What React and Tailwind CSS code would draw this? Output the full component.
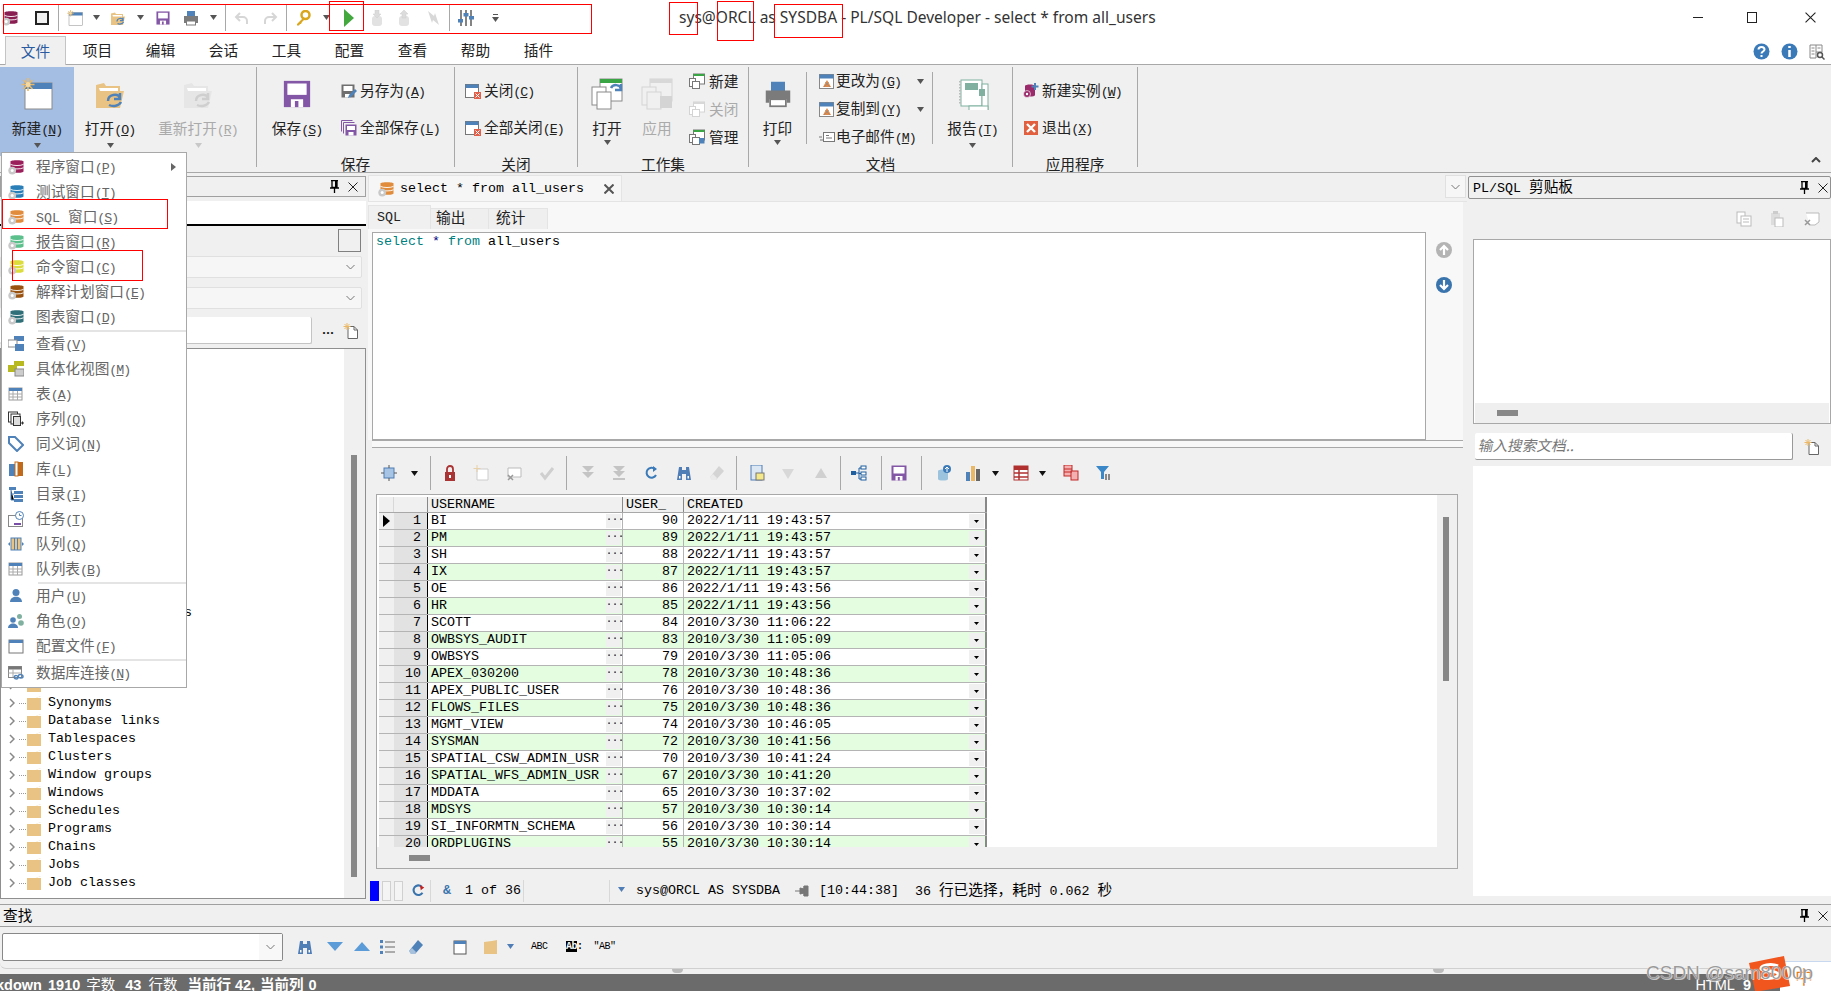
import React from "react";

const MONO = "[font-family:'Liberation_Mono','Noto_Sans_CJK_SC',monospace]";

const Tri = ({ c = "#555", className = "" }) => (
  <svg width="7" height="5" viewBox="0 0 7 5" className={"shrink-0 " + className}><path d="M0 0h7L3.5 5z" fill={c} /></svg>
);

const Ico = ({ children, s = 16, vb = 16, className = "" }) => (
  <svg width={s} height={s} viewBox={`0 0 ${vb} ${vb}`} className={"shrink-0 " + className}>{children}</svg>
);

const DbGear = ({ c, s = 16, gear = "#c9c9c9" }) => (
  <Ico s={s}>
    <path d="M2.500 2.600C2.500.8 15.500.8 15.500 2.600v9.800c0 1.800-13 1.800-13 0z" fill={c} />
    <path d="M2.500 5.400c2.500 1.500 10.500 1.500 13 0M2.500 8.800c2.500 1.500 10.500 1.500 13 0" stroke="#fff" strokeWidth=".9" fill="none" />
    <circle cx="4.200" cy="11.600" r="3.900" fill={gear} />
    <circle cx="4.200" cy="11.600" r="1.500" fill="#fff" />
  </Ico>
);

const NewWin = ({ s = 32 }) => (
  <Ico s={s} vb={32}>
    <rect x="4" y="5" width="27" height="26" fill="#fff" stroke="#8a8a8a" />
    <rect x="4" y="5" width="27" height="6" fill="#4f82b9" />
    <g stroke="#e9b866" strokeWidth="1.6">
      <path d="M7 0v13M0.5 6.5h13M2.5 2l9 9M11.500 2l-9 9" />
    </g>
    <circle cx="7" cy="6.500" r="2.500" fill="#f4d9a2" />
  </Ico>
);

const Folder = ({ s = 32, dis }) => (
  <Ico s={s} vb={32}>
    <path d="M2 7l8-2 2 3h14v5h4l-4 17H2z" fill={dis ? "#e6e6e6" : "#e9c384"} />
    <path d="M5 10h19v3H6z" fill="#fff" />
    <path d="M14 23c0-7 10-8 12-3M26 15v6h-6M15 27c4 2 10 1 12-3" stroke={dis ? "#cfcfcf" : "#4f82b9"} strokeWidth="2.500" fill="none" />
  </Ico>
);

const Save = ({ s = 16, c = "#8456a6" }) => (
  <Ico s={s}>
    <path d="M.5.5h15v15H.5z" fill={c} />
    <rect x="2.500" y="2" width="11" height="6.500" fill="#fff" />
    <rect x="4.500" y="11" width="7" height="4.500" fill="#fff" />
    <rect x="6.800" y="12" width="2" height="3.500" fill={c} />
  </Ico>
);

const Printer = ({ s = 16, c = "#7b7b7b" }) => (
  <Ico s={s}>
    <rect x="4" y="1" width="8" height="6" fill="#4f82b9" />
    <path d="M1 6h14v7h-2v-2H3v2H1z" fill={c} />
    <rect x="3.500" y="11" width="9" height="4" fill="#fff" stroke={c} />
  </Ico>
);

const Undo = ({ flip }) => (
  <Ico className={flip ? "-scale-x-100" : ""}>
    <path d="M6 3L2 7l4 4M2 7h7a4 4 0 0 1 4 4v3" stroke="#d6d6d6" strokeWidth="2" fill="none" />
  </Ico>
);

const Key = () => (
  <Ico>
    <circle cx="10.500" cy="5" r="4" fill="none" stroke="#d9a61e" strokeWidth="2.500" />
    <path d="M8 8l-6 6v1.500h2l1-1.500 1 0 1-2 2-2z" fill="#d9a61e" />
  </Ico>
);

const Play = () => (
  <svg width="10" height="18" viewBox="0 0 10 18" className="shrink-0"><path d="M0 0l10 9-10 9z" fill="#43a83e" /></svg>
);

const Mouse = ({ up }) => (
  <Ico>
    <rect x="3" y="6" width="10" height="10" rx="3" fill="#e2e2e2" />
    <path d={up ? "M8 0l4 4h-2v4H6V4H4z" : "M6 0h4v4h2l-4 4-4-4h2z"} fill="#dcdcdc" stroke="#cfcfcf" strokeWidth=".5" />
  </Ico>
);

const Bolt = () => (
  <Ico><path d="M3 1l6 5 1-3 4 12-6-5-1 3z" fill="#d8d8d8" /></Ico>
);

const Sliders = () => (
  <Ico>
    <path d="M3 0v16M8 0v16M13 0v16" stroke="#666" strokeWidth="1.600" />
    <rect x="0" y="9" width="5" height="3.500" fill="#4f82b9" />
    <rect x="5.500" y="3" width="5" height="3.500" fill="#4f82b9" />
    <rect x="11" y="6" width="5" height="3.500" fill="#4f82b9" />
  </Ico>
);

const CloseWin = () => (
  <Ico>
    <rect x=".5" y="1.500" width="13" height="13" fill="#fff" stroke="#777" />
    <rect x=".5" y="1.500" width="13" height="3.500" fill="#4f82b9" />
    <rect x="9" y="9" width="7" height="7" fill="#e0604c" />
    <path d="M10.500 10.500l4 4m0-4l-4 4" stroke="#fff" />
  </Ico>
);

const SaveAs = () => (
  <Ico>
    <path d="M.5 1.500h13v13H.5z" fill="#6f6f6f" />
    <rect x="2.500" y="3" width="9" height="5" fill="#fff" />
    <rect x="4" y="11" width="5" height="3.500" fill="#fff" />
    <path d="M7 15l1-3 6-6 2 2-6 6z" fill="#4f82b9" />
  </Ico>
);

const SaveAll = () => (
  <Ico>
    <path d="M.5.5h11M.5.500v11M2.500 2.500h11M2.500 2.500v11" stroke="#8456a6" fill="none" />
    <path d="M4.500 4.500h11v11h-11z" fill="#8456a6" />
    <rect x="6" y="6" width="8" height="4" fill="#fff" />
    <rect x="7.500" y="12" width="5" height="3.500" fill="#fff" />
  </Ico>
);

const StackBig = ({ dis }) => (
  <Ico s={32} vb={32}>
    <rect x="9" y="1" width="22" height="22" fill={dis ? "#f0f0f0" : "#fff"} stroke={dis ? "#d4d4d4" : "#8a8a8a"} />
    <rect x="9" y="1" width="22" height="4" fill={dis ? "#d8d8d8" : "#3aa545"} />
    <rect x="1" y="9" width="14" height="18" fill={dis ? "#f0f0f0" : "#fff"} stroke={dis ? "#d4d4d4" : "#8a8a8a"} />
    <rect x="6" y="14" width="14" height="17" fill={dis ? "#f0f0f0" : "#fff"} stroke={dis ? "#d4d4d4" : "#8a8a8a"} />
    {dis ? <path d="M19 18h12v12H19z" fill="#d4d4d4" /> : <path d="M20 10c2-4 9-4 10 1M30 6v6h-6" stroke="#4f82b9" strokeWidth="2.500" fill="none" />}
  </Ico>
);

const StackSm = ({ top = "#3aa545", dis, badge }) => (
  <Ico>
    <rect x="4.500" y="1" width="11" height="10" fill="#fff" stroke={dis ? "#d4d4d4" : "#777"} />
    <rect x="4.500" y="1" width="11" height="2" fill={dis ? "#d8d8d8" : top} />
    <rect x=".5" y="5.500" width="6" height="8" fill="#fff" stroke={dis ? "#d4d4d4" : "#777"} />
    <rect x="3.500" y="8.500" width="7" height="7" fill="#fff" stroke={dis ? "#d4d4d4" : "#777"} />
    {badge && <rect x="10" y="9" width="5.500" height="5.500" fill="#4f82b9" />}
  </Ico>
);

const DocCh = () => (
  <Ico>
    <rect x=".5" y="1.500" width="14" height="14" fill="#fff" stroke="#888" />
    <rect x=".5" y="1.500" width="14" height="4" fill="#4f82b9" />
    <path d="M4 14l4-7 4 7z" fill="#e08a4a" />
    <path d="M6 9l5 5M10 9l-5 5" stroke="#888" strokeWidth=".6" />
  </Ico>
);

const MailI = () => (
  <Ico>
    <rect x="4.500" y="3.500" width="11" height="9" fill="#fff" stroke="#777" />
    <path d="M7 6.500h3M7 9h6M0 8h3M1 11h3" stroke="#777" />
  </Ico>
);

const ReportBig = () => (
  <Ico s={32} vb={32}>
    <rect x="4" y="2" width="21" height="26" fill="#fff" stroke="#7fb0a0" />
    <path d="M3 3v24" stroke="#bbb" strokeWidth="2" strokeDasharray="1.500 1.500" />
    <rect x="8" y="5" width="13" height="7" fill="#7fb0a0" />
    <rect x="25" y="6" width="6" height="27" fill="#fff" stroke="#7fb0a0" />
    <rect x="12" y="28" width="19" height="5" fill="#fff" stroke="#7fb0a0" />
    <rect x="22" y="11" width="6" height="7" fill="#7fb0a0" />
  </Ico>
);

const Instance = () => (
  <Ico>
    <path d="M2 3c0-2 10-2 10 0v9c0 2-10 2-10 0z" fill="#9b2a6b" />
    <circle cx="4" cy="11" r="3.500" fill="#9b2a6b" stroke="#fff" strokeWidth=".6" />
    <circle cx="4" cy="11" r="1.200" fill="#fff" />
    <path d="M12 0v7M8.500 3.500h7" stroke="#4f82b9" strokeWidth="2" />
  </Ico>
);

const ExitI = () => (
  <Ico>
    <rect x="1" y="1" width="14" height="14" fill="#e0603f" />
    <path d="M4 4l8 8m0-8l-8 8" stroke="#fff" strokeWidth="2.400" />
  </Ico>
);

const Pin = () => (
  <svg width="9" height="13" viewBox="0 0 9 13" className="shrink-0">
    <path d="M1 .5h7M2 .5v7h5v-7M0 8h9M4.500 8v5" stroke="#000" strokeWidth="1.300" fill="none" />
    <rect x="5" y="1" width="2" height="6.500" fill="#000" />
  </svg>
);

const XIco = ({ c = "#222", s = 10, w = 1 }) => (
  <svg width={s} height={s} viewBox="0 0 10 10" className="shrink-0"><path d="M.5.5l9 9m0-9l-9 9" stroke={c} strokeWidth={w} /></svg>
);

const Chev = ({ c = "#777" }) => (
  <svg width="9" height="6" viewBox="0 0 9 6" className="shrink-0"><path d="M.5 1l4 4 4-4" stroke={c} fill="none" /></svg>
);

const NewDoc = () => (
  <Ico>
    <path d="M5 3.500h6l3.500 3.500v8.500H5z" fill="#fff" stroke="#666" />
    <path d="M11 3.500V7h3.500" stroke="#666" fill="none" />
    <g stroke="#ecb968" strokeWidth="1"><path d="M4 0v7M.5 3.500h7M1.500 1l5 5M6.500 1l-5 5" /></g>
  </Ico>
);

const Binoc = ({ c = "#4f7db5" }) => (
  <Ico>
    <path d="M3 2h3v3h4V2h3l2 13H10V9H6v6H1z" fill={c} />
    <rect x="7" y="5" width="2" height="3" fill={c} />
    <rect x="3" y="11" width="1.500" height="2.500" fill="#fff" />
    <rect x="11.500" y="11" width="1.500" height="2.500" fill="#fff" />
  </Ico>
);

const Eraser = ({ c = "#d4d4d4" }) => (
  <Ico><path d="M10 1l5 5-8 9H3L1 12z" fill={c} /><path d="M3 15l-2-3 3-3 4 4-1 2z" fill="#fff" fillOpacity=".5" /></Ico>
);

const T = ({ children, k, className = "" }) => (
  <span className={"whitespace-nowrap " + className}>
    {children}
    {k && <span className={MONO + " text-[13.33px] tracking-[-1px]"}>(<u>{k}</u>)</span>}
  </span>
);

const Big = ({ w, icon, label, k, dis, active, caret = true }) => (
  <div className={`flex flex-col items-center shrink-0 ${w} ${active ? "bg-[#a4bde3]" : ""}`}>
    <div className="h-[30px] mt-[12px] flex items-center justify-center">{icon}</div>
    <T k={k} className={`mt-[11px] leading-[16px] ${dis ? "text-[#aaa]" : "text-[#222]"}`}>{label}</T>
    {caret && <Tri c={dis ? "#c8c8c8" : "#555"} className="mt-[4px]" />}
  </div>
);

const Small = ({ icon, label, k, dis, caret, gap = "gap-[3px]" }) => (
  <div className={`flex items-center h-[16px] ${gap}`}>
    {icon}
    <T k={k} className={dis ? "text-[#aaa]" : "text-[#222]"}>{label}</T>
    {caret && <Tri className="ml-auto" />}
  </div>
);

const Group = ({ w, label, children, line = true }) => (
  <div className={`flex flex-col h-[100px] mt-[2px] shrink-0 ${w} ${line ? "border-r border-[#a8a8a8]" : ""}`}>
    <div className="flex h-[89px] shrink-0">{children}</div>
    <div className="text-center leading-[16px] text-[#222]">{label}</div>
  </div>
);

const Sep = ({ className = "h-[26px]" }) => <div className={`w-px bg-[#a8a8a8] shrink-0 ${className}`} />;

const TABS = ["项目", "编辑", "会话", "工具", "配置", "查看", "帮助", "插件"];

const MENU = [
  [<DbGear c="#9b1f5b" />, "程序窗口", "P", true],
  [<DbGear c="#2a7fb8" />, "测试窗口", "T"],
  [<DbGear c="#e08c3c" />, <><span className={MONO + " text-[13.33px]"}>SQL </span>窗口</>, "S"],
  [<DbGear c="#5cc08c" />, "报告窗口", "R"],
  [<DbGear c="#dcdc3c" />, "命令窗口", "C"],
  [<DbGear c="#9a5210" />, "解释计划窗口", "E"],
  [<DbGear c="#2f6f78" />, "图表窗口", "D"],
  "sep",
  [<Ico><rect x="6" y="0" width="10" height="5" fill="#4f82b9" /><rect x="0" y="4" width="9" height="7" fill="#fff" stroke="#888" /><rect x="7" y="8" width="9" height="7" fill="#4f82b9" /></Ico>, "查看", "V"],
  [<Ico><rect x="6" y="0" width="10" height="5" fill="#b8b820" /><rect x="0" y="4" width="9" height="7" fill="#b8b820" /><rect x="7" y="8" width="9" height="7" fill="#ccc" stroke="#888" /></Ico>, "具体化视图", "M"],
  [<Ico><rect x="1" y="2" width="13" height="12" fill="#fff" stroke="#999" /><rect x="1" y="2" width="13" height="3" fill="#4f82b9" /><path d="M1 8h13M1 11h13M5 5v9M9.500 5v9" stroke="#aaa" /></Ico>, "表", "A"],
  [<Ico><rect x=".5" y="1" width="9" height="10" fill="#fff" stroke="#333" /><rect x="3" y="3" width="9" height="10" fill="#fff" stroke="#333" /><rect x="5.500" y="5.500" width="7" height="9" fill="#ddd" stroke="#333" /><path d="M13 12h3M14.500 10.500v3" stroke="#333" /></Ico>, "序列", "Q"],
  [<Ico><path d="M1 1h6l8 8-6 6-8-8z" fill="#fff" stroke="#4f82b9" strokeWidth="2" /></Ico>, "同义词", "N"],
  [<Ico><rect x="1" y="3" width="6" height="12" fill="#4f82b9" /><rect x="7" y="1" width="3" height="14" fill="#fff" stroke="#c26a1c" /><rect x="10" y="1" width="5" height="14" fill="#c26a1c" /></Ico>, "库", "L"],
  [<Ico><rect x="1" y="1" width="7" height="3" fill="#4f82b9" /><path d="M3 4v10h3M3 8h3" stroke="#4f82b9" /><rect x="6" y="5" width="9" height="3" fill="#4f82b9" /><rect x="6" y="9" width="9" height="3" fill="#4f82b9" /><rect x="6" y="13" width="9" height="3" fill="#4f82b9" /></Ico>, "目录", "I"],
  [<Ico><rect x=".5" y="4.500" width="14" height="11" fill="#fff" stroke="#888" /><rect x="6" y="12" width="7" height="2" fill="#7a4fa8" /><circle cx="11.500" cy="4.500" r="4" fill="#fff" stroke="#4f82b9" /><path d="M11.500 2.500v2h2" stroke="#4f82b9" fill="none" /></Ico>, "任务", "T"],
  [<Ico><rect x="3" y="2" width="10" height="12" fill="#e9c384" stroke="#4f82b9" /><path d="M6.500 2v12M9.500 2v12" stroke="#4f82b9" /><path d="M0 8l2-2v4zM16 8l-2-2v4z" fill="#4f82b9" /></Ico>, "队列", "Q"],
  [<Ico><rect x="1" y="2" width="13" height="12" fill="#fff" stroke="#999" /><rect x="1" y="2" width="13" height="3" fill="#4f82b9" /><path d="M1 8h13M1 11h13M5 5v9M9.500 5v9" stroke="#aaa" /></Ico>, "队列表", "B"],
  "sep",
  [<Ico><circle cx="8" cy="4.500" r="3.500" fill="#4f82b9" /><path d="M2 14c0-7 12-7 12 0z" fill="#4f82b9" /></Ico>, "用户", "U"],
  [<Ico><circle cx="5" cy="7" r="2.800" fill="#4f82b9" /><path d="M0 15c0-6 10-6 10 0z" fill="#4f82b9" /><circle cx="11.500" cy="3.500" r="2.500" fill="#7fb0a0" /><circle cx="13" cy="10" r="2.800" fill="#7fb0a0" /></Ico>, "角色", "O"],
  [<Ico><rect x="1" y="2" width="14" height="13" fill="#fff" stroke="#777" /><rect x="1" y="2" width="14" height="3" fill="#4f82b9" /></Ico>, "配置文件", "F"],
  "sep",
  [<Ico><rect x=".5" y="1.500" width="13" height="11" fill="#fff" stroke="#888" /><rect x=".5" y="1.500" width="13" height="3" fill="#777" /><path d="M.5 8h13M5 4v8" stroke="#aaa" /><path d="M6 12.500c1-3 4-2 4 0s-3 2-4 0M10 11.500c1-3 5-2 5 0s-4 2-5 0" stroke="#4f82b9" strokeWidth="1.500" fill="none" /></Ico>, "数据库连接", "N"],
];

const TREE = ["Materialized views", "", "", "", "Roles", "Synonyms", "Database links", "Tablespaces", "Clusters", "Window groups", "Windows", "Schedules", "Programs", "Chains", "Jobs", "Job classes"];

const ROWS = [
  ["BI", 90, "2022/1/11 19:43:57"], ["PM", 89, "2022/1/11 19:43:57"], ["SH", 88, "2022/1/11 19:43:57"], ["IX", 87, "2022/1/11 19:43:57"],
  ["OE", 86, "2022/1/11 19:43:56"], ["HR", 85, "2022/1/11 19:43:56"], ["SCOTT", 84, "2010/3/30 11:06:22"], ["OWBSYS_AUDIT", 83, "2010/3/30 11:05:09"],
  ["OWBSYS", 79, "2010/3/30 11:05:06"], ["APEX_030200", 78, "2010/3/30 10:48:36"], ["APEX_PUBLIC_USER", 76, "2010/3/30 10:48:36"], ["FLOWS_FILES", 75, "2010/3/30 10:48:36"],
  ["MGMT_VIEW", 74, "2010/3/30 10:46:05"], ["SYSMAN", 72, "2010/3/30 10:41:56"], ["SPATIAL_CSW_ADMIN_USR", 70, "2010/3/30 10:41:24"], ["SPATIAL_WFS_ADMIN_USR", 67, "2010/3/30 10:41:20"],
  ["MDDATA", 65, "2010/3/30 10:37:02"], ["MDSYS", 57, "2010/3/30 10:30:14"], ["SI_INFORMTN_SCHEMA", 56, "2010/3/30 10:30:14"], ["ORDPLUGINS", 55, "2010/3/30 10:30:14"],
];

const I16 = ({ c = "#d8d8d8" }) => <Ico><path d="M2 4l6 10 6-10z" fill={c} /></Ico>;

const TOOL = [
  ["ml-[9px]", <Ico><rect x="3" y="3" width="10" height="10" fill="#a8c4e4" stroke="#4f7db5" /><path d="M8 0v3M8 13v3M0 8h3M13 8h3" stroke="#555" /></Ico>],
  ["ml-[14px]", <Tri c="#111" />],
  ["ml-[12px]", <Sep className="h-[34px]" />],
  ["ml-[11px]", <Ico><path d="M5 7V4a3 3 0 0 1 6 0v3" stroke="#a33" strokeWidth="1.800" fill="none" /><rect x="3" y="7" width="10" height="9" fill="#a33" /><rect x="7" y="10" width="2" height="3" fill="#fff" /></Ico>],
  ["ml-[15px]", <Ico><path d="M4 4h11v11H4z" fill="#fff" stroke="#ccc" /><g stroke="#e8d0a8"><path d="M4 0v7M.5 3.500h7" /></g></Ico>],
  ["ml-[17px]", <Ico><path d="M2 3h13v9H2z" fill="#fff" stroke="#bbb" /><path d="M2 10l5 5m0-5l-5 5" stroke="#999" strokeWidth="1.500" /></Ico>],
  ["ml-[17px]", <Ico><path d="M2 8l4 5 8-10" stroke="#cfcfcf" strokeWidth="3" fill="none" /></Ico>],
  ["ml-[11px]", <Sep className="h-[34px]" />],
  ["ml-[13px]", <Ico><path d="M2 1h12L8 7zM2 7h12l-6 6z" fill="#c4c4c4" /></Ico>],
  ["ml-[15px]", <Ico><path d="M2 1h12L8 7zM2 6h12l-6 6z" fill="#c4c4c4" /><rect x="2" y="13" width="12" height="2" fill="#c4c4c4" /></Ico>],
  ["ml-[17px]", <Ico><path d="M11 4a5 5 0 1 0 1 6" stroke="#3a7ab8" strokeWidth="2" fill="none" /><path d="M9 1l4 3-4 3z" fill="#3a7ab8" /></Ico>],
  ["ml-[16px]", <Binoc />],
  ["ml-[17px]", <Eraser />],
  ["ml-[11px]", <Sep className="h-[34px]" />],
  ["ml-[12px]", <Ico><rect x="2" y="0" width="11" height="15" fill="#dbe7f3" stroke="#4f7db5" /><rect x="7" y="8" width="8" height="7" fill="#f4e88a" stroke="#777" /></Ico>],
  ["ml-[15px]", <I16 />],
  ["ml-[17px]", <Ico><path d="M2 13l6-10 6 10z" fill="#d0d0d0" /></Ico>],
  ["ml-[11px]", <Sep className="h-[34px]" />],
  ["ml-[10px]", <Ico><rect x="0" y="6" width="5" height="4" fill="#1f5fa0" /><rect x="10" y="1" width="5" height="3" fill="#fff" stroke="#1f5fa0" /><rect x="10" y="7" width="5" height="3" fill="#fff" stroke="#1f5fa0" /><rect x="10" y="12" width="5" height="3" fill="#fff" stroke="#1f5fa0" /><path d="M5 8h3M8 3v11M8 3h2M8 8.500h2M8 14h2" stroke="#1f5fa0" /></Ico>],
  ["ml-[14px]", <Sep className="h-[34px]" />],
  ["ml-[9px]", <Save />],
  ["ml-[14px]", <Sep className="h-[34px]" />],
  ["ml-[14px]", <Ico><path d="M2 6c0-2 10-2 10 0v8c0 2-10 2-10 0z" fill="#9cc3dd" /><circle cx="11" cy="4" r="4" fill="#3a7ab8" /><path d="M11 7V2M9 4l2-2 2 2" stroke="#fff" fill="none" /></Ico>],
  ["ml-[13px]", <Ico><rect x="1" y="7" width="4" height="9" fill="#4f82b9" /><rect x="6" y="1" width="4" height="15" fill="#e9b866" /><rect x="11" y="4" width="4" height="12" fill="#666" /></Ico>],
  ["ml-[11px]", <Tri c="#111" />],
  ["ml-[14px]", <Ico><rect x="1" y="1" width="14" height="14" fill="#fff" stroke="#b03030" /><rect x="1" y="1" width="14" height="4" fill="#b03030" /><path d="M1 8h14M1 12h14M6 1v14" stroke="#b03030" strokeWidth="1.500" /></Ico>],
  ["ml-[10px]", <Tri c="#111" />],
  ["ml-[17px]", <Ico><rect x="1" y="0" width="8" height="11" fill="#f4b0b0" stroke="#c02828" /><rect x="8" y="6" width="7" height="9" fill="#f4b0b0" stroke="#c02828" /><path d="M1 4h8M1 7h8" stroke="#c02828" /></Ico>],
  ["ml-[16px]", <Ico><path d="M1 1h13L9 7v7H6V7z" fill="#3a88c8" /><path d="M11 9v6M14 9v6" stroke="#666" strokeWidth="1.500" /></Ico>],
];

export default function App() {
  return (
    <div className="relative w-[1831px] h-[991px] overflow-hidden bg-white text-[14.67px] text-[#222] [font-family:'Noto_Sans_CJK_SC','Liberation_Sans',sans-serif]">
      {/* title bar */}
      <div className="h-[35px] flex items-center">
        <div className="ml-[2px]"><DbGear c="#8a1d52" /></div>
        <div className="ml-[17px] w-[14px] h-[14px] border-2 border-[#222] bg-[#f0f0f0] shrink-0" />
        <Sep className="ml-[9px] h-[26px]" />
        <div className="ml-[8px]"><NewWin s={16} /></div>
        <Tri className="ml-[10px]" />
        <div className="ml-[10px]"><Folder s={16} /></div>
        <Tri className="ml-[11px]" />
        <div className="ml-[12px]"><Save s={14} /></div>
        <div className="ml-[13px]"><Printer /></div>
        <Tri className="ml-[11px]" />
        <Sep className="ml-[8px] h-[26px]" />
        <div className="ml-[8px]"><Undo /></div>
        <div className="ml-[12px]"><Undo flip /></div>
        <Sep className="ml-[8px] h-[26px]" />
        <div className="ml-[8px]"><Key /></div>
        <Tri className="ml-[12px]" />
        <div className="ml-[14px]"><Play /></div>
        <div className="ml-[15px]"><Mouse /></div>
        <div className="ml-[11px]"><Mouse up /></div>
        <div className="ml-[13px]"><Bolt /></div>
        <Sep className="ml-[8px] h-[26px]" />
        <div className="ml-[8px]"><Sliders /></div>
        <div className="ml-[18px] flex flex-col items-center gap-[2px]"><div className="w-[5px] h-px bg-[#555]" /><Tri /></div>
        <div className="ml-[180px] pb-[2px] whitespace-nowrap text-[15.55px] leading-[20px] text-[#333] [font-family:'Noto_Sans','Liberation_Sans',sans-serif]">sys@ORCL as SYSDBA - PL/SQL Developer - select * from all_users</div>
        <div className="ml-auto flex items-center mr-[15px]">
          <div className="w-[10px] h-px bg-[#222]" />
          <div className="ml-[44px] w-[10px] h-[11px] border border-[#222]" />
          <div className="ml-[48px]"><XIco s={11} /></div>
        </div>
      </div>

      {/* ribbon tabs */}
      <div className="h-[30px] flex items-end border-b border-[#a8a8a8]">
        <div className="ml-[5px] w-[61px] h-[29px] -mb-px bg-[#f0f0f0] border border-b-0 border-[#c4c4c4] flex items-center justify-center text-[#2a5aa0]">文件</div>
        {TABS.map((t) => (
          <div key={t} className="w-[63px] h-[28px] flex items-center justify-center">{t}</div>
        ))}
        <div className="ml-auto mr-[6px] mb-[4px] flex items-center gap-[11px]">
          <svg width="17" height="17" viewBox="0 0 17 17"><circle cx="8.500" cy="8.500" r="8" fill="#3a7ab8" /><path d="M5.500 6.500c0-3.500 6-3.500 6 0 0 2-3 2-3 4M8.500 12v2" stroke="#fff" strokeWidth="2" fill="none" /></svg>
          <svg width="17" height="17" viewBox="0 0 17 17"><circle cx="8.500" cy="8.500" r="8" fill="#3a7ab8" /><path d="M8.500 3v2M8.500 7v7" stroke="#fff" strokeWidth="2.500" /></svg>
          <svg width="16" height="16" viewBox="0 0 16 16"><path d="M1 1h6v13H1zM7 1h6v7H7" fill="#fff" stroke="#888" /><path d="M2.500 4h3M2.500 7h3M2.500 10h3M8.500 4h3" stroke="#888" /><circle cx="11" cy="11" r="2.500" fill="none" stroke="#555" strokeWidth="1.500" /><path d="M13 13l2.500 2.500" stroke="#555" strokeWidth="1.500" /></svg>
        </div>
      </div>

      {/* ribbon */}
      <div className="relative h-[108px] bg-[#f0f0f0] flex border-b border-[#a8a8a8]">
        <Group w="w-[257px]" label="">
          <Big w="w-[74px]" active icon={<NewWin />} label="新建" k="N" />
          <Big w="w-[72px]" icon={<Folder />} label="打开" k="O" />
          <Big w="w-[104px]" dis icon={<Folder dis />} label="重新打开" k="R" />
        </Group>
        <Group w="w-[198px]" label="保存">
          <Big w="w-[80px]" icon={<Save s={28} />} label="保存" k="S" caret={false} />
          <div className="ml-[4px] pt-[16px] flex flex-col gap-[21px]">
            <Small icon={<SaveAs />} label="另存为" k="A" />
            <Small icon={<SaveAll />} label="全部保存" k="L" />
          </div>
        </Group>
        <Group w="w-[123px]" label="关闭">
          <div className="ml-[10px] pt-[16px] flex flex-col gap-[21px]">
            <Small icon={<CloseWin />} label="关闭" k="C" />
            <Small icon={<CloseWin />} label="全部关闭" k="E" />
          </div>
        </Group>
        <Group w="w-[171px]" label="工作集">
          <Big w="w-[58px]" icon={<StackBig />} label="打开" />
          <Big w="w-[42px]" dis icon={<StackBig dis />} label="应用" caret={false} />
          <div className="ml-[11px] pt-[6px] flex flex-col gap-[12px]">
            <Small icon={<StackSm />} label="新建" gap="gap-[4px]" />
            <Small icon={<StackSm dis />} label="关闭" dis gap="gap-[4px]" />
            <Small icon={<StackSm badge />} label="管理" gap="gap-[4px]" />
          </div>
        </Group>
        <Group w="w-[264px]" label="文档">
          <Big w="w-[57px]" icon={<Printer s={28} />} label="打印" />
          <div className="w-px h-[72px] mt-[5px] bg-[#a8a8a8]" />
          <div className="ml-[12px] w-[105px] pt-[6px] flex flex-col gap-[12px]">
            <Small icon={<DocCh />} label="更改为" k="G" caret gap="gap-[1px]" />
            <Small icon={<DocCh />} label="复制到" k="Y" caret gap="gap-[1px]" />
            <Small icon={<MailI />} label="电子邮件" k="M" gap="gap-[1px]" />
          </div>
          <div className="ml-[8px] w-px h-[72px] mt-[5px] bg-[#a8a8a8]" />
          <Big w="w-[79px]" icon={<ReportBig />} label="报告" k="T" />
        </Group>
        <Group w="w-[125px]" label="应用程序">
          <div className="ml-[10px] pt-[16px] flex flex-col gap-[21px]">
            <Small icon={<Instance />} label="新建实例" k="W" />
            <Small icon={<ExitI />} label="退出" k="X" />
          </div>
        </Group>
        <svg width="10" height="6" viewBox="0 0 10 6" className="absolute left-[1811px] top-[92px]"><path d="M1 5l4-4 4 4" stroke="#444" strokeWidth="2" fill="none" /></svg>
      </div>

      {/* main */}
      <div className="h-[731px] flex bg-[#f0f0f0]">
        {/* left */}
        <div className="w-[368px] shrink-0 flex flex-col pr-[2px] pt-[3px]">
          <div className="h-[21px] border border-[#a0a0a0] flex items-center">
            <div className="ml-auto mr-[7px] flex items-center gap-[9px]"><Pin /><XIco /></div>
          </div>
          <div className="h-[25px] mt-[4px] bg-white border-b-2 border-black" />
          <div className="h-[23px] mt-[3px] flex justify-end pr-[5px]"><div className="w-[23px] h-[23px] border border-[#808080]" /></div>
          <div className="h-[22px] mt-[4px] mr-[4px] bg-[#f6f6f6] border border-[#e0e0e0] rounded-[2px] flex items-center justify-end pr-[6px]"><Chev /></div>
          <div className="h-[22px] mt-[9px] mr-[4px] bg-[#f6f6f6] border border-[#e0e0e0] rounded-[2px] flex items-center justify-end pr-[6px]"><Chev /></div>
          <div className="h-[27px] mt-[8px] flex items-center">
            <div className="w-[312px] shrink-0 h-[27px] bg-white border-b border-r border-[#c4c4c4] rounded-[2px]" />
            <span className={MONO + " ml-[8px] w-[12px] shrink-0 text-[13.33px] tracking-[-4px] font-bold leading-none"}>...</span>
            <div className="ml-[11px]"><NewDoc /></div>
          </div>
          <div className="mt-[4px] h-[551px] border border-[#8f8f8f] bg-white flex">
            <div className={`flex-1 pt-[255px] pl-[8px] text-[13.33px] leading-[18px] text-black ${MONO}`}>
              {TREE.map((t, i) =>
                t ? (
                  <div key={i} className="h-[18px] flex items-center whitespace-nowrap">
                    <svg width="6" height="10" viewBox="0 0 6 10" className="shrink-0"><path d="M1 1l4 4-4 4" stroke="#888" strokeWidth="1.500" fill="none" /></svg>
                    <div className="ml-[4px] w-[7px] border-t border-dotted border-[#999]" />
                    <svg width="15" height="14" viewBox="0 0 15 14" className="ml-[1px] shrink-0"><path d="M0 2h9l5-2v14H0z" fill="#e8c384" /><path d="M9 2l5-2v2z" fill="#fff" /></svg>
                    <span className="ml-[6px]">{t}</span>
                  </div>
                ) : (
                  <div key={i} className="h-[18px]" />
                )
              )}
            </div>
            <div className="w-[21px] bg-[#f0f0f0] pl-[7px] pt-[106px]"><div className="w-[6px] h-[422px] bg-[#888]" /></div>
          </div>
        </div>

        {/* center */}
        <div className="w-[1099px] shrink-0 flex flex-col">
          <div className="h-[29px] flex pt-[2px] border-b border-[#e4e4e4]">
            <div className={`w-[254px] h-[26px] bg-[#f6f6f6] border border-b-0 border-[#e4e4e4] flex items-center text-[13.33px] text-black ${MONO}`}>
              <div className="ml-[9px]"><DbGear c="#e08c3c" /></div>
              <span className="ml-[6px]">select * from all_users</span>
              <div className="ml-[20px]"><XIco c="#555" w={2} /></div>
            </div>
            <div className="ml-auto mr-[1px] w-[21px] h-[23px] bg-[#f6f6f6] border border-[#e0e0e0] flex items-center justify-center"><Chev /></div>
          </div>
          <div className="h-[238px] w-[1095px] bg-[#f8f8f8]">
            <div className="h-[27px] pt-[3px] flex items-end">
              <div className={`w-[63px] h-[24px] bg-[#f0f0f0] border-x border-t border-[#e4e4e4] pl-[8px] flex items-center text-[13.33px] ${MONO}`}>SQL</div>
              <div className="w-[58px] h-[21px] bg-[#efefef] border-r border-t border-[#e4e4e4] pl-[5px] pb-[5px] flex items-center">输出</div>
              <div className="w-[59px] h-[21px] bg-[#efefef] border-r border-t border-[#e4e4e4] pl-[7px] pb-[5px] flex items-center">统计</div>
            </div>
            <div className="mt-[3px] flex">
              <div className={`ml-[4px] w-[1054px] h-[208px] bg-white border border-[#a8a8a8] pl-[3px] text-[13.33px] leading-[18px] ${MONO}`}>
                <span className="text-[#008080]">select</span> <span className="text-[#000080]">*</span> <span className="text-[#008080]">from</span> <span className="text-black">all_users</span>
              </div>
              <div className="ml-[10px] flex flex-col">
                <svg width="16" height="16" viewBox="0 0 16 16" className="mt-[10px]"><circle cx="8" cy="8" r="8" fill="#b4b4b4" /><path d="M8 13V4M4 8l4-4 4 4" stroke="#fff" strokeWidth="2.200" fill="none" /></svg>
                <svg width="16" height="16" viewBox="0 0 16 16" className="mt-[19px]"><circle cx="8" cy="8" r="8" fill="#3a74ad" /><path d="M8 3v9M4 8l4 4 4-4" stroke="#fff" strokeWidth="2.200" fill="none" /></svg>
              </div>
            </div>
          </div>
          <div className="h-[8px] ml-[4px] w-[1091px] border-y border-[#a8a8a8] bg-[#f8f8f8]" />
          <div className="h-[46px] pt-[4px] flex items-center pl-[4px] box-border">
            {TOOL.map(([m, ic], i) => (
              <div key={i} className={`${m} flex items-center`}>{ic}</div>
            ))}
          </div>
          <div className="ml-[8px] w-[1082px] h-[375px] border border-[#a8a8a8] flex flex-col bg-white">
            <div className="h-[352px] flex overflow-hidden">
              <div className={`flex-1 overflow-hidden pl-[2px] pt-[2px] text-[13.33px] leading-[16px] text-black ${MONO}`}>
                <div className="flex h-[16px] w-[608px] bg-[#f0f0f0] border-b border-[#a8a8a8]">
                  <div className="w-[15px] border-r border-[#d8d8d8]" />
                  <div className="w-[34px] border-r border-[#888]" />
                  <div className="w-[195px] pl-[3px] border-r border-[#888]">USERNAME</div>
                  <div className="w-[61px] pl-[3px] border-r border-[#888]">USER_</div>
                  <div className="w-[303px] pl-[3px] border-r-2 border-[#888]">CREATED</div>
                </div>
                {ROWS.map((r, i) => (
                  <div key={i} className={`flex h-[17px] w-[608px] border-b border-[#b4b4b4] ${i % 2 ? "bg-[#e4fde1]" : "bg-white"}`}>
                    <div className="w-[15px] bg-[#f0f0f0] flex items-center justify-center">
                      {i === 0 && <svg width="7" height="12" viewBox="0 0 7 12"><path d="M0 0l7 6-7 6z" fill="#000" /></svg>}
                    </div>
                    <div className="w-[34px] bg-[#e2e2e2] text-right pr-[6px] border-r border-black">{i + 1}</div>
                    <div className="w-[195px] pl-[3px] flex justify-between pr-[1px] border-r border-[#b4b4b4]">
                      <span>{r[0]}</span>
                      <span className="w-[15px] h-[14px] mt-[1px] bg-[#f0f0f0] text-center text-[10px] leading-[8px]">...</span>
                    </div>
                    <div className="w-[61px] text-right pr-[5px] border-r border-[#b4b4b4]">{r[1]}</div>
                    <div className="w-[303px] pl-[3px] pr-[1px] flex justify-between border-r-2 border-[#888]">
                      <span>{r[2]}</span>
                      <span className="w-[15px] h-[14px] mt-[1px] bg-[#f0f0f0] flex items-center justify-center"><svg width="5" height="3" viewBox="0 0 5 3"><path d="M0 0h5L2.500 3z" fill="#000" /></svg></span>
                    </div>
                  </div>
                ))}
              </div>
              <div className="w-[20px] bg-[#f0f0f0] pl-[6px] pt-[22px]"><div className="w-[6px] h-[164px] bg-[#888]" /></div>
            </div>
            <div className="flex-1 bg-[#f0f0f0] pl-[32px] pt-[8px]"><div className="w-[21px] h-[6px] bg-[#888]" /></div>
          </div>
          <div className={`mt-[9px] h-[26px] flex items-center text-[13.33px] text-black ${MONO}`}>
            <div className="ml-[2px] w-[9px] h-[20px] bg-[#0000ff]" />
            <div className="ml-[3px] w-[9px] h-[20px] bg-[#f4f4f4] border border-[#d0d0d0]" />
            <div className="ml-[3px] w-[9px] h-[20px] bg-[#f4f4f4] border border-[#d0d0d0]" />
            <div className="ml-[9px]"><Ico s={14}><path d="M11 3a5.500 5.500 0 1 0 1 7" stroke="#3a74ad" strokeWidth="2.400" fill="none" /><path d="M9 1l5 3-4 3z" fill="#c02020" /></Ico></div>
            <div className="ml-[4px] w-px h-[22px] bg-[#d8d8d8]" />
            <span className="ml-[12px] w-[10px] text-[#3a74ad] font-bold">&amp;</span>
            <span className="ml-[12px] whitespace-pre">1 of 36</span>
            <div className="ml-[2px] w-px h-[22px] bg-[#d8d8d8]" />
            <div className="ml-[85px] w-px h-[22px] bg-[#d8d8d8]" />
            <Tri c="#4f7db5" className="ml-[8px] -mt-[4px]" />
            <span className="ml-[11px] whitespace-pre">sys@ORCL AS SYSDBA</span>
            <svg width="14" height="12" viewBox="0 0 14 12" className="ml-[15px] shrink-0"><path d="M0 6h5M9 1v10M5 3l4 1v4l-4 1zM9 1h4v10H9z" stroke="#777" fill="#777" /></svg>
            <span className="ml-[10px] whitespace-pre">[10:44:38]</span>
            <span className="ml-[16px] whitespace-pre">36 <span className="text-[14.67px]">行已选择，耗时</span> 0.062 <span className="text-[14.67px]">秒</span></span>
          </div>
        </div>

        {/* right */}
        <div className="flex-1 flex flex-col pt-[3px]">
          <div className={`h-[23px] ml-[1px] border border-[#909090] rounded-[2px] flex items-center pl-[4px] text-[13.33px] text-black ${MONO}`}>
            <span>PL/SQL <span className="text-[14.67px]">剪贴板</span></span>
            <div className="ml-auto mr-[2px] flex items-center gap-[9px]"><Pin /><XIco /></div>
          </div>
          <div className="h-[40px] flex items-center justify-end pr-[11px] gap-[18px]">
            <Ico><rect x="1" y="1" width="8" height="11" fill="#fff" stroke="#bbb" /><rect x="5" y="5" width="10" height="10" fill="#fff" stroke="#bbb" /><path d="M7 8h6M7 11h6" stroke="#bbb" /></Ico>
            <Ico><rect x="1" y="2" width="9" height="12" fill="#ddd" /><rect x="5" y="7" width="8" height="9" fill="#fff" stroke="#bbb" /><rect x="3" y="0" width="5" height="3" fill="#ccc" /></Ico>
            <Ico><path d="M2 2h13v9l-4 3H6" fill="#fff" stroke="#bbb" /><path d="M1 9l5 5m0-5l-5 5" stroke="#999" strokeWidth="1.500" /></Ico>
          </div>
          <div className="ml-[6px] w-[358px] h-[185px] border border-[#a8a8a8] bg-white flex flex-col justify-end">
            <div className="mx-px h-[20px] bg-[#efefef] pl-[22px] pt-[7px]"><div className="w-[21px] h-[6px] bg-[#888]" /></div>
          </div>
          <div className="mt-[9px] flex items-center">
            <div className="ml-[8px] w-[318px] h-[27px] bg-white border-r border-b border-[#999] rounded-[2px] pl-[4px] text-[#777] leading-[24px]"><span className="inline-block -skew-x-12">输入搜索文档..</span></div>
            <div className="ml-[11px]"><NewDoc /></div>
          </div>
          <div className="ml-[6px] mt-[6px] h-[430px] bg-white" />
        </div>
      </div>

      {/* find */}
      <div className="h-[70px] border-t border-[#a0a0a0] bg-[#f0f0f0] flex flex-col">
        <div className="h-[22px] shrink-0 border-b border-[#a0a0a0] flex items-center pl-[3px] text-black">
          <span className="leading-[20px] -mt-[2px]">查找</span>
          <div className="ml-auto mr-[3px] flex items-center gap-[9px]"><Pin /><XIco /></div>
        </div>
        <div className="h-[42px] shrink-0 border-b border-[#d0d0d0] rounded-b-[6px] flex items-center pb-[2px]">
          <div className="ml-[2px] w-[281px] h-[28px] bg-white border border-[#888] rounded-[2px] flex items-center justify-end">
            <div className="w-[23px] h-full bg-[#f8f8f8] flex items-center justify-center"><Chev /></div>
          </div>
          <div className="ml-[14px]"><Binoc /></div>
          <svg width="16" height="9" viewBox="0 0 16 9" className="ml-[14px] shrink-0"><path d="M0 0h16L8 9z" fill="#5b9bd8" /></svg>
          <svg width="16" height="9" viewBox="0 0 16 9" className="ml-[11px] shrink-0"><path d="M0 9h16L8 0z" fill="#5b9bd8" /></svg>
          <div className="ml-[10px]"><Ico><path d="M5 3h10M5 8h10M5 13h10" stroke="#666" /><rect x="0" y="1" width="3" height="3" fill="#4f82b9" /><rect x="0" y="6.500" width="3" height="3" fill="#4f82b9" /><rect x="0" y="12" width="3" height="3" fill="#4f82b9" /></Ico></div>
          <div className="ml-[12px]"><Eraser c="#4f82b9" /></div>
          <div className="ml-[28px]"><Ico><rect x="2" y="2" width="12" height="13" fill="#fff" stroke="#555" /><rect x="2" y="2" width="12" height="3" fill="#4f82b9" /></Ico></div>
          <div className="ml-[15px]"><Ico><path d="M1 3l8-1 5-1v14H1z" fill="#e8c384" /></Ico></div>
          <Tri c="#4f7db5" className="ml-[8px]" />
          <span className={MONO + " ml-[17px] text-[10px] text-black tracking-[-0.5px] w-[18px]"}>ABC</span>
          <span className={MONO + " ml-[17px] text-[10px] tracking-[-0.5px] font-bold"}><span className="bg-black text-white">Ab</span><span className="text-black">:</span></span>
          <span className={MONO + " ml-[11px] text-[10px] text-black tracking-[-0.5px]"}>"AB"</span>
        </div>
      </div>

      {/* dark strip */}
      <div className="h-[17px] bg-[#6b6b6b] overflow-hidden flex items-start pt-[1px] text-[14.5px] leading-[20px] text-white font-bold whitespace-nowrap [font-family:'Liberation_Sans','Noto_Sans_CJK_SC',sans-serif]">
        <span className="-ml-[4px] w-[42px]">kdown</span>
        <span className="ml-[10px]">1910</span>
        <span className="ml-[6px] font-normal">字数</span>
        <span className="ml-[10px]">43</span>
        <span className="ml-[7px] font-normal">行数</span>
        <span className="ml-[10px]">当前行</span>
        <span className="ml-[4px]">42,</span>
        <span className="ml-[5px]">当前列</span>
        <span className="ml-[5px]">0</span>
        <span className="ml-auto mr-[80px] font-normal">HTML&nbsp;&nbsp;<b>9</b></span>
      </div>

      {/* overlays */}
      <div className="absolute left-[1px] top-[152px] w-[186px] bg-white border border-[#a8a8a8] py-[1.500px] text-[#666] z-10">
        {MENU.map((m, i) =>
          m === "sep" ? (
            <div key={i} className="ml-[36px] h-[2px] bg-[#e4e4e4]" />
          ) : (
            <div key={i} className="h-[25px] flex items-center pl-[6px]">
              {m[0]}
              <T k={m[2]} className="ml-[12px] leading-[18px]">{m[1]}</T>
              {m[3] && <svg width="5" height="8" viewBox="0 0 5 8" className="ml-auto mr-[10px]"><path d="M0 0l5 4-5 4z" fill="#666" /></svg>}
            </div>
          )
        )}
      </div>

      <div className="absolute left-[3px] top-[4px] w-[589px] h-[30px] border border-[#ff0000] z-20" />
      <div className="absolute left-[329px] top-[1px] w-[35px] h-[30px] border border-[#ff0000] z-20" />
      <div className="absolute left-[669px] top-[2px] w-[29px] h-[33px] border border-[#ff0000] z-20" />
      <div className="absolute left-[717px] top-[1px] w-[37px] h-[40px] border border-[#ff0000] z-20" />
      <div className="absolute left-[774px] top-[4px] w-[69px] h-[34px] border border-[#ff0000] z-20" />
      <div className="absolute left-[2px] top-[199px] w-[166px] h-[30px] border border-[#ff0000] z-20" />
      <div className="absolute left-[12px] top-[250px] w-[131px] h-[31px] border border-[#ff0000] z-20" />

      <div className="absolute left-[672px] top-[969px] w-[11px] h-[4px] bg-[#bbb] rounded-b-full" />
      <div className="absolute left-[1433px] top-[969px] w-[11px] h-[4px] bg-[#bbb] rounded-b-full" />

      <div className="absolute left-[1780px] top-[961px] w-[51px] h-[30px] bg-white border-t border-[#c8d8ee] text-[#e87a1c] z-20">
        <span className="absolute left-[15px] top-[2px] text-[18px] leading-[24px]">中</span>
        <span className="absolute left-[46px] top-[0px] text-[18px] leading-[24px]">•</span>
      </div>
      <svg width="42" height="35" viewBox="0 0 42 35" className="absolute left-[1748px] top-[956px] z-20">
        <path d="M1 7L36 0l6 30-30 5H7z" fill="#f0561e" />
        <path d="M30 10c-7-3-18-1-17 3 1 3 16 1 17 5 1 4-11 6-17 3" stroke="#fff" strokeWidth="3" fill="none" />
      </svg>
      <div className="absolute left-[1646px] top-[961px] z-30 text-[19px] leading-[24px] whitespace-nowrap text-[#9a9a9a] [font-family:'Liberation_Sans',sans-serif] [text-shadow:0_0_1px_#fff,1px_1px_0_rgba(255,255,255,0.6)]">CSDN @sam8000p</div>
    </div>
  );
}
